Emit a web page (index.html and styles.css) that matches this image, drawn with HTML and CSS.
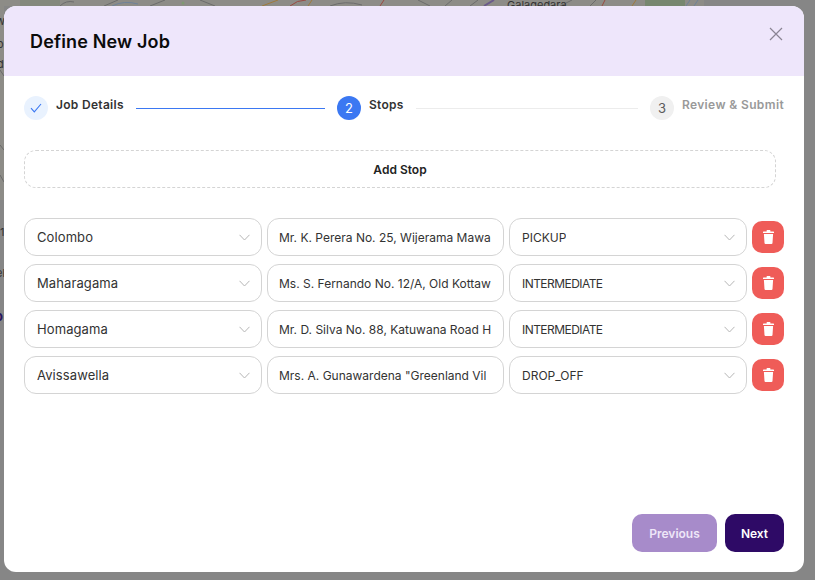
FILE: index.html
```html
<!DOCTYPE html>
<html>
<head>
  <title>Define New Job</title>
  <meta charset="UTF-8">
  <link rel="stylesheet" href="styles.css">
</head>
<body>
  <div class="backdrop">
    <svg class="map" width="815" height="580" viewBox="0 0 815 580" fill="none">
      <rect width="704" height="6" fill="#8d8c87"/>
      <rect width="4" height="200" fill="#8d8c87"/>
      <rect x="20" width="40" height="6" fill="#84897c"/>
      <rect x="645" width="40" height="6" fill="#77876f"/>
      <path d="M60 6 Q66 0 74 2 M104 6 L118 0 M150 6 L165 0 M200 0 L215 6 M330 6 Q345 0 362 5 M418 0 L430 6 M445 6 L452 0 M470 6 L478 0 M560 6 L572 0 M590 6 L596 0" stroke="#6c6c6c"/>
      <path d="M112 6 Q124 0 138 4 M686 6 L690 0 M694 6 L698 0" stroke="#6f8299"/>
      <path d="M262 6 L278 0 M308 6 L312 0 M632 6 L636 0" stroke="#a07a3c"/>
      <path d="M290 6 Q297 0 306 0 M380 6 L384 0 M602 6 L605 0" stroke="#9a4a42"/>
      <path d="M484 6 L494 0" stroke="#6a5a8a" stroke-width="2"/>
      <path d="M0 70 L4 76 M0 145 L4 150 M0 175 L4 182" stroke="#6a6a6a"/>
      <circle cx="183" cy="3" r="1.5" fill="#7f9a72"/>
    </svg>
    <span class="map-label map-label-top">Galagedara</span>
    <span class="map-label map-label-a">w</span>
    <span class="map-label map-label-e">o</span>
    <span class="map-label map-label-f">d</span>
    <span class="map-label map-label-b">1</span>
    <span class="map-label map-label-c">el</span>
    <span class="map-label map-label-d">o</span>
  </div>

  <div class="modal">
    <header class="modal-head">
      <h1>Define New Job</h1>
      <button class="close" aria-label="Close">
        <svg width="14" height="14" viewBox="0 0 14 14"><path d="M1 1 L13 13 M13 1 L1 13" stroke="#8a8494" stroke-width="1.2" fill="none"/></svg>
      </button>
    </header>

    <div class="modal-body">
      <div class="steps">
        <div class="step">
          <span class="dot dot-done">
            <svg width="12" height="10" viewBox="0 0 12 10"><path d="M1 5.2 L4.3 8.8 L11 1" stroke="#3b78f2" stroke-width="1.1" fill="none"/></svg>
          </span>
          <span class="step-name">Job Details</span>
        </div>
        <div class="line line-done"></div>
        <div class="step">
          <span class="dot dot-active">2</span>
          <span class="step-name">Stops</span>
        </div>
        <div class="line"></div>
        <div class="step">
          <span class="dot dot-todo">3</span>
          <span class="step-name step-name-todo">Review &amp; Submit</span>
        </div>
      </div>

      <button class="add-stop">Add Stop</button>

      <div class="stops">
        <div class="stop">
          <div class="field field-select"><span class="value value-city">Colombo</span><svg class="chev" width="11" height="7" viewBox="0 0 11 7"><path d="M.5 .8 L5.5 6 L10.5 .8"/></svg></div>
          <div class="field field-address"><span class="value">Mr. K. Perera No. 25, Wijerama Mawa</span></div>
          <div class="field field-select"><span class="value">PICKUP</span><svg class="chev" width="11" height="7" viewBox="0 0 11 7"><path d="M.5 .8 L5.5 6 L10.5 .8"/></svg></div>
          <button class="delete" aria-label="Delete stop"><svg width="11" height="14" viewBox="0 0 11 14"><path d="M3.6 .5 Q3.6 0 4.2 0 H6.8 Q7.4 0 7.4 .5 V1.4 H10.4 Q11 1.4 11 2 V3 H0 V2 Q0 1.4 .6 1.4 H3.6 Z M.9 4 H10.1 L9.5 13 Q9.4 14 8.5 14 H2.5 Q1.6 14 1.5 13 Z" fill="#fff"/></svg></button>
        </div>
        <div class="stop">
          <div class="field field-select"><span class="value value-city">Maharagama</span><svg class="chev" width="11" height="7" viewBox="0 0 11 7"><path d="M.5 .8 L5.5 6 L10.5 .8"/></svg></div>
          <div class="field field-address"><span class="value">Ms. S. Fernando No. 12/A, Old Kottaw</span></div>
          <div class="field field-select"><span class="value value-narrow">INTERMEDIATE</span><svg class="chev" width="11" height="7" viewBox="0 0 11 7"><path d="M.5 .8 L5.5 6 L10.5 .8"/></svg></div>
          <button class="delete" aria-label="Delete stop"><svg width="11" height="14" viewBox="0 0 11 14"><path d="M3.6 .5 Q3.6 0 4.2 0 H6.8 Q7.4 0 7.4 .5 V1.4 H10.4 Q11 1.4 11 2 V3 H0 V2 Q0 1.4 .6 1.4 H3.6 Z M.9 4 H10.1 L9.5 13 Q9.4 14 8.5 14 H2.5 Q1.6 14 1.5 13 Z" fill="#fff"/></svg></button>
        </div>
        <div class="stop">
          <div class="field field-select"><span class="value value-city">Homagama</span><svg class="chev" width="11" height="7" viewBox="0 0 11 7"><path d="M.5 .8 L5.5 6 L10.5 .8"/></svg></div>
          <div class="field field-address"><span class="value">Mr. D. Silva No. 88, Katuwana Road H</span></div>
          <div class="field field-select"><span class="value value-narrow">INTERMEDIATE</span><svg class="chev" width="11" height="7" viewBox="0 0 11 7"><path d="M.5 .8 L5.5 6 L10.5 .8"/></svg></div>
          <button class="delete" aria-label="Delete stop"><svg width="11" height="14" viewBox="0 0 11 14"><path d="M3.6 .5 Q3.6 0 4.2 0 H6.8 Q7.4 0 7.4 .5 V1.4 H10.4 Q11 1.4 11 2 V3 H0 V2 Q0 1.4 .6 1.4 H3.6 Z M.9 4 H10.1 L9.5 13 Q9.4 14 8.5 14 H2.5 Q1.6 14 1.5 13 Z" fill="#fff"/></svg></button>
        </div>
        <div class="stop">
          <div class="field field-select"><span class="value value-city">Avissawella</span><svg class="chev" width="11" height="7" viewBox="0 0 11 7"><path d="M.5 .8 L5.5 6 L10.5 .8"/></svg></div>
          <div class="field field-address"><span class="value">Mrs. A. Gunawardena "Greenland Vil</span></div>
          <div class="field field-select"><span class="value">DROP_OFF</span><svg class="chev" width="11" height="7" viewBox="0 0 11 7"><path d="M.5 .8 L5.5 6 L10.5 .8"/></svg></div>
          <button class="delete" aria-label="Delete stop"><svg width="11" height="14" viewBox="0 0 11 14"><path d="M3.6 .5 Q3.6 0 4.2 0 H6.8 Q7.4 0 7.4 .5 V1.4 H10.4 Q11 1.4 11 2 V3 H0 V2 Q0 1.4 .6 1.4 H3.6 Z M.9 4 H10.1 L9.5 13 Q9.4 14 8.5 14 H2.5 Q1.6 14 1.5 13 Z" fill="#fff"/></svg></button>
        </div>
      </div>

      <div class="actions">
        <button class="btn btn-prev">Previous</button>
        <button class="btn btn-next">Next</button>
      </div>
    </div>
  </div>
</body>
</html>
```

FILE: styles.css
```css
html, body {
  margin: 0;
  height: 100%;
}
body {
  width: 815px;
  height: 580px;
  overflow: hidden;
  background: #868686;
  font-family: Inter, "Noto Sans", sans-serif;
  position: relative;
  padding: 6px 11px 8px 4px;
  box-sizing: border-box;
}
button {
  font-family: inherit;
  border: 0;
  cursor: pointer;
}
.backdrop {
  position: absolute;
  inset: 0;
}
.map {
  position: absolute;
  left: 0;
  top: 0;
}
.map-label {
  position: absolute;
  font-size: 11px;
  color: #333;
}
.map-label-top { left: 507px; top: -2px; }
.map-label-a { left: -4px; top: 14px; }
.map-label-e { left: -3px; top: 37px; }
.map-label-f { left: -3px; top: 57px; }
.map-label-b { left: 0; top: 225px; }
.map-label-c { left: -4px; top: 266px; }
.map-label-d { left: -5px; top: 308px; color: #2a1560; font-weight: 700; font-size: 13px; }

.modal {
  position: relative;
  height: 566px;
  background: #fff;
  border-radius: 12px;
  overflow: hidden;
  display: flex;
  flex-direction: column;
}
.modal-head {
  height: 70px;
  flex: none;
  background: #eee6fb;
  display: flex;
  align-items: center;
  justify-content: space-between;
  padding: 0 21px 0 26px;
}
.modal-head h1 {
  margin: 0;
  font-size: 18px;
  font-weight: 600;
  letter-spacing: .15px;
  color: #0b0b0b;
}
.close {
  background: none;
  padding: 0;
  height: 14px;
  margin-top: -14px;
}
.close svg {
  display: block;
}
.modal-body {
  flex: 1;
  display: flex;
  flex-direction: column;
  padding: 20px 20px 20px;
}

.steps {
  display: flex;
  align-items: flex-start;
  height: 24px;
  gap: 12px;
}
.step {
  display: flex;
  gap: 8px;
}
.dot {
  width: 24px;
  height: 24px;
  border-radius: 50%;
  display: flex;
  align-items: center;
  justify-content: center;
  font-size: 13px;
}
.dot-done { background: #e9f2fe; }
.dot-active { background: #3b78f2; color: #fff; }
.dot-todo { background: #f0f0f0; color: #5c5c5c; }
.step-name {
  font-size: 12px;
  font-weight: 600;
  line-height: 18px;
  letter-spacing: .3px;
  color: #333;
}
.step-name-todo {
  letter-spacing: .37px;
  color: #999;
}
.line {
  flex: 1;
  height: 1px;
  margin-top: 12px;
  background: #ececec;
}
.line-done {
  flex: none;
  width: 189px;
  background: #3b78f2;
}

.add-stop {
  margin-top: 30px;
  height: 38px;
  width: 752px;
  flex: none;
  background: #fff;
  border: 1px dashed #d4d4d4;
  border-radius: 12px;
  font-size: 12px;
  font-weight: 600;
  color: #222;
}

.stops {
  margin-top: 30px;
  display: flex;
  flex-direction: column;
  gap: 8px;
}
.stop {
  display: flex;
  align-items: center;
  gap: 5px;
}
.field {
  width: 238px;
  height: 38px;
  box-sizing: border-box;
  flex: none;
  border: 1px solid #d4d4d4;
  border-radius: 12px;
  padding: 0 12px;
  display: flex;
  align-items: center;
  justify-content: space-between;
  font-size: 12px;
  color: #333;
  overflow: hidden;
}
.field-address {
  width: 237px;
  padding-left: 11px;
}
.value {
  white-space: nowrap;
  overflow: hidden;
}
.value-city {
  font-size: 13px;
  letter-spacing: .1px;
}
.value-narrow {
  letter-spacing: -.55px;
}
.chev {
  flex: none;
  margin-right: -1px;
}
.chev path {
  fill: none;
  stroke: #b5b5b5;
}
.delete {
  width: 32px;
  height: 32px;
  flex: none;
  padding: 0;
  border-radius: 10px;
  background: #ef5c58;
  display: flex;
  align-items: center;
  justify-content: center;
}

.actions {
  margin-top: auto;
  display: flex;
  justify-content: flex-end;
  gap: 8px;
}
.btn {
  height: 38px;
  border-radius: 10px;
  font-size: 12px;
  font-weight: 600;
  color: #fff;
}
.btn-prev {
  width: 85px;
  background: #a78bca;
  color: #eee6f8;
}
.btn-next {
  width: 59px;
  background: #2e0a66;
}
```
